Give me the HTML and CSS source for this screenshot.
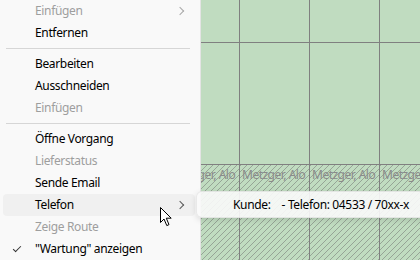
FILE: index.html
```html
<!DOCTYPE html>
<html lang="de">
<head>
  <meta charset="UTF-8">
  <title>Kontextmenü</title>
  <link rel="stylesheet" href="styles.css">
</head>
<body>
  <div class="planner">
    <div class="row top">
      <div class="cell"></div><div class="cell"></div><div class="cell"></div>
      <div class="cell"></div><div class="cell"></div><div class="cell"></div>
    </div>
    <div class="row mid">
      <div class="cell"></div><div class="cell"></div><div class="cell"></div>
      <div class="cell"></div><div class="cell"></div><div class="cell"></div>
    </div>
    <div class="row busy">
      <div class="cell"><span>Metzger, Alo</span></div>
      <div class="cell"><span>Metzger, Alo</span></div>
      <div class="cell"><span>Metzger, Alo</span></div>
      <div class="cell"><span>Metzger, Alo</span></div>
      <div class="cell"><span>Metzger, Alo</span></div>
      <div class="cell"><span>Metzger, Alo</span></div>
    </div>
  </div>

  <ul class="menu">
    <li class="off sub">Einfügen</li>
    <li>Entfernen</li>
    <li class="sep"></li>
    <li>Bearbeiten</li>
    <li>Ausschneiden</li>
    <li class="off">Einfügen</li>
    <li class="sep"></li>
    <li>Öffne Vorgang</li>
    <li class="off">Lieferstatus</li>
    <li>Sende Email</li>
    <li class="sub hover">Telefon</li>
    <li class="off">Zeige Route</li>
    <li class="checked">"Wartung" anzeigen</li>
  </ul>

  <div class="submenu">Kunde:&nbsp;&nbsp;&nbsp; - Telefon: 04533 / 70xx-x</div>

  <svg class="cursor" width="13" height="20" viewBox="0 0 13 20">
    <path d="M0.5 0.5 L0.5 15.5 L4 12 L6.8 18.6 L9 17.6 L6.3 11.2 L11.2 11.2 Z" fill="#fff" stroke="#000" stroke-width="1" stroke-linejoin="round"/>
  </svg>
</body>
</html>
```
FILE: styles.css
```css
* {
  margin: 0;
  padding: 0;
  box-sizing: border-box;
}
body {
  width: 420px;
  height: 260px;
  overflow: hidden;
  position: relative;
  background: #c0dcc0;
  font-family: "Noto Sans", "Liberation Sans", sans-serif;
  font-size: 12px;
  letter-spacing: -0.35px;
}

/* planner grid behind the menu */
.planner {
  margin-left: 30px;
}
.planner .row {
  display: flex;
}
.planner .cell {
  flex: 0 0 70px;
  border-right: 1px solid #808080;
  border-bottom: 1px solid #808080;
  overflow: hidden;
  white-space: nowrap;
}
.planner .top .cell {
  height: 43px;
}
.planner .mid .cell {
  height: 122px;
}
.planner .busy .cell {
  height: 100px;
  border-bottom: none;
  padding: 1px 0 0 2px;
  background: repeating-linear-gradient(135deg, #96a596 0 0.9px, transparent 0.9px 4.25px);
}
.planner .busy span {
  color: #8a8a8a;
  line-height: 16px;
  letter-spacing: -0.5px;
}

/* context menu */
.menu {
  position: absolute;
  left: 0;
  top: 0;
  width: 201px;
  height: 260px;
  list-style: none;
  background: #f9f9f9;
  border-right: 1px solid #e4e4e4;
  padding: 0 5px 0 3px;
}
.menu li {
  position: relative;
  height: 22px;
  line-height: 22px;
  padding-left: 32px;
  color: #000;
  border-radius: 4px;
}
.menu li.off {
  color: #9e9e9e;
}
.menu li.hover {
  background: #f0f0f0;
}
.menu li.sub::after {
  content: "";
  position: absolute;
  right: 12px;
  top: 8px;
  width: 5px;
  height: 5px;
  border-top: 1px solid #5a5a5a;
  border-right: 1px solid #5a5a5a;
  transform: rotate(45deg);
}
.menu li.off.sub::after {
  border-color: #a8a8a8;
}
.menu li.checked::before {
  content: "";
  position: absolute;
  left: 10px;
  top: 8px;
  width: 7px;
  height: 3px;
  border-left: 1px solid #333;
  border-bottom: 1px solid #333;
  transform: rotate(-45deg);
}
.menu li.sep {
  height: 1px;
  margin: 4px 5px 4px 3px;
  padding: 0;
  background: #d6d6d6;
  border-radius: 0;
}

/* submenu popup */
.submenu {
  position: absolute;
  left: 196px;
  top: 191px;
  width: 240px;
  height: 27px;
  line-height: 26px;
  padding-left: 36px;
  background: rgba(250, 250, 250, 0.9);
  border: 1px solid rgba(0, 0, 0, 0.07);
  border-radius: 6px;
  box-shadow: 0 2px 6px rgba(0, 0, 0, 0.12);
  color: #000;
  white-space: nowrap;
}

.cursor {
  position: absolute;
  left: 160px;
  top: 207px;
}
```
